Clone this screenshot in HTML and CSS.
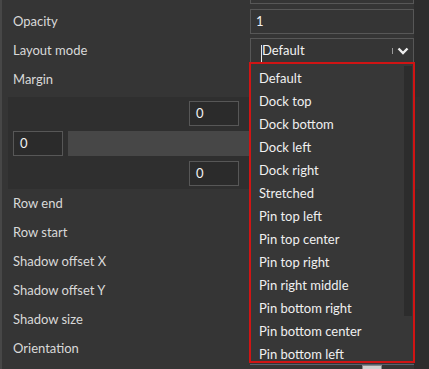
FILE: index.html
```html
<html>
	<head>
<link rel="stylesheet" href="styles.css">
	</head>
	<body>
		<div class="frame">
			<div class="panel">
				<div class="stub"></div>

				<div class="row">
					<span class="label">Opacity</span>
					<div class="field">1</div>
				</div>

				<div class="row">
					<span class="label">Layout mode</span>
					<div class="field select">
						<span class="caret"></span>Default
						<span class="sep"></span>
						<svg class="chevron" width="12" height="8" viewBox="0 0 12 8"><path d="M1.5 1.5 L6 6 L10.5 1.5" fill="none" stroke="#eeeeee" stroke-width="2.4"/></svg>

						<div class="dropdown">
							<div class="item">Default</div>
							<div class="item">Dock top</div>
							<div class="item">Dock bottom</div>
							<div class="item">Dock left</div>
							<div class="item">Dock right</div>
							<div class="item">Stretched</div>
							<div class="item">Pin top left</div>
							<div class="item">Pin top center</div>
							<div class="item">Pin top right</div>
							<div class="item">Pin right middle</div>
							<div class="item">Pin bottom right</div>
							<div class="item">Pin bottom center</div>
							<div class="item">Pin bottom left</div>
							<div class="thumb"></div>
						</div>
					</div>
				</div>

				<div class="row">
					<span class="label">Margin</span>
				</div>

				<!-- margin editor -->
				<div class="margin">
					<div class="num">0</div>
					<div class="mid">
						<div class="num">0</div>
						<div class="bar"></div>
						<div class="num">0</div>
					</div>
					<div class="num">0</div>
				</div>

				<div class="row"><span class="label">Row end</span></div>
				<div class="row"><span class="label">Row start</span></div>
				<div class="row"><span class="label">Shadow offset X</span></div>
				<div class="row"><span class="label">Shadow offset Y</span></div>
				<div class="row"><span class="label">Shadow size</span></div>
				<div class="row">
					<span class="label">Orientation</span>
					<div class="orient"><span class="knob"></span></div>
				</div>
			</div>
			<div class="rail"></div>
		</div>
	</body>
</html>
```

FILE: styles.css
```css
body {
    margin: 0;
    background: #353535;
    font-family: Lato, "Open Sans", sans-serif;
    font-size: 13px;
    color: #d9d9d9;
    overflow: hidden;
}

.frame {
    display: flex;
    height: 369px;
}

.panel {
    width: 412px;
    border-left: 2px solid #474747;
    background: #353535;
}

.rail {
    flex: 1;
    background: #2d2d2d;
}

.stub {
    margin-left: 248px;
    width: 162px;
    height: 3px;
    border: 1px solid #575757;
    border-top: none;
    margin-bottom: 3px;
}

.row {
    display: flex;
    align-items: center;
    height: 29px;
}

.label {
    flex: 1;
    padding-left: 11px;
    padding-bottom: 1px;
}

.field {
    align-self: flex-start;
    margin-top: 2px;
    width: 164px;
    height: 25px;
    box-sizing: border-box;
    border: 1px solid #575757;
    padding-left: 5px;
    line-height: 23px;
    color: #f2f2f2;
    display: flex;
    align-items: center;
}

.select {
    position: relative;
    padding-left: 11px;
}

.caret {
    width: 1px;
    height: 17px;
    background: #e8e8e8;
    margin-left: -1px;
    margin-top: 5px;
}

.sep {
    margin-left: auto;
    width: 1px;
    height: 6px;
    background: #9a9a9a;
    margin-right: 4px;
}

.chevron {
    margin-right: 4px;
}

.dropdown {
    position: absolute;
    left: -2px;
    top: 23px;
    width: 166px;
    height: 301px;
    box-sizing: border-box;
    border: 2px solid #d01414;
    background: #373737;
    padding-top: 3px;
    overflow: hidden;
    z-index: 5;
}

.item {
    height: 23px;
    line-height: 23px;
    padding-left: 8px;
    color: #f0f0f0;
}

.thumb {
    position: absolute;
    top: 2px;
    right: 1px;
    width: 8px;
    height: 250px;
    background: #2c2c2c;
}

.margin {
    position: relative;
    margin: 3px 0 0 6px;
    width: 412px;
    height: 92px;
    box-sizing: border-box;
    padding: 4px 5px 3px;
    background: #2f2f2f;
    display: flex;
    flex-direction: column;
    align-items: center;
    gap: 5px;
}

.num {
    width: 50px;
    height: 25px;
    box-sizing: border-box;
    border: 1px solid #575757;
    background: #2b2b2b;
    padding-left: 6px;
    line-height: 23px;
    color: #f2f2f2;
}

.mid {
    align-self: stretch;
    display: flex;
    gap: 5px;
}

.bar {
    flex: 1;
    height: 25px;
    background: #474747;
}

.orient {
    align-self: flex-start;
    margin-top: 30px;
    width: 164px;
    height: 10px;
    border-top: 1px solid #5a6270;
    padding-left: 112px;
    box-sizing: border-box;
}

.knob {
    display: block;
    width: 18px;
    height: 8px;
    background: #cfcfcf;
    border: 1px solid #888888;
}
```
